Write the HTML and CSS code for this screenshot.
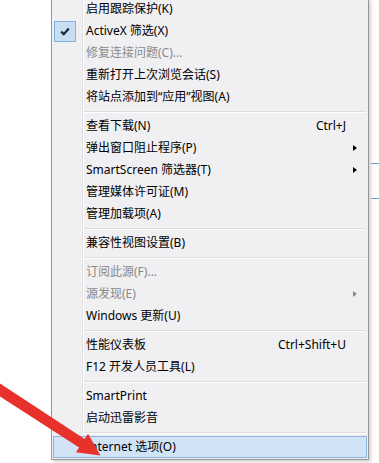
FILE: index.html
```html
<!DOCTYPE html>
<html lang="zh-CN">
<head>
<meta charset="utf-8">
<title>IE 工具菜单</title>
<link rel="stylesheet" href="styles.css">
</head>
<body>
<div class="page">
  <div class="left-space"></div>
  <ul class="menu">
    <li class="item"><span class="icon"></span><span class="label">启用跟踪保护(K)</span><span class="key"></span><span class="sub"></span></li>
    <li class="item"><span class="icon"><span class="check"><svg width="10" height="9" viewBox="0 0 10 9"><path d="M1.2 4.6 L3.8 7.2 L8.8 1.6" fill="none" stroke="#1c2636" stroke-width="2.2"/></svg></span></span><span class="label">ActiveX 筛选(X)</span><span class="key"></span><span class="sub"></span></li>
    <li class="item disabled"><span class="icon"></span><span class="label">修复连接问题(C)...</span><span class="key"></span><span class="sub"></span></li>
    <li class="item"><span class="icon"></span><span class="label">重新打开上次浏览会话(S)</span><span class="key"></span><span class="sub"></span></li>
    <li class="item"><span class="icon"></span><span class="label">将站点添加到“应用”视图(A)</span><span class="key"></span><span class="sub"></span></li>
    <li class="sep"></li>
    <li class="item"><span class="icon"></span><span class="label">查看下载(N)</span><span class="key">Ctrl+J</span><span class="sub"></span></li>
    <li class="item"><span class="icon"></span><span class="label">弹出窗口阻止程序(P)</span><span class="key"></span><span class="sub"><i class="tri"></i></span></li>
    <li class="item"><span class="icon"></span><span class="label">SmartScreen 筛选器(T)</span><span class="key"></span><span class="sub"><i class="tri"></i></span></li>
    <li class="item"><span class="icon"></span><span class="label">管理媒体许可证(M)</span><span class="key"></span><span class="sub"></span></li>
    <li class="item"><span class="icon"></span><span class="label">管理加载项(A)</span><span class="key"></span><span class="sub"></span></li>
    <li class="sep"></li>
    <li class="item"><span class="icon"></span><span class="label">兼容性视图设置(B)</span><span class="key"></span><span class="sub"></span></li>
    <li class="sep"></li>
    <li class="item disabled"><span class="icon"></span><span class="label">订阅此源(F)...</span><span class="key"></span><span class="sub"></span></li>
    <li class="item disabled"><span class="icon"></span><span class="label">源发现(E)</span><span class="key"></span><span class="sub"><i class="tri"></i></span></li>
    <li class="item"><span class="icon"></span><span class="label">Windows 更新(U)</span><span class="key"></span><span class="sub"></span></li>
    <li class="sep"></li>
    <li class="item"><span class="icon"></span><span class="label">性能仪表板</span><span class="key">Ctrl+Shift+U</span><span class="sub"></span></li>
    <li class="item"><span class="icon"></span><span class="label">F12 开发人员工具(L)</span><span class="key"></span><span class="sub"></span></li>
    <li class="sep"></li>
    <li class="item"><span class="icon"></span><span class="label">SmartPrint</span><span class="key"></span><span class="sub"></span></li>
    <li class="item"><span class="icon"></span><span class="label">启动迅雷影音</span><span class="key"></span><span class="sub"></span></li>
    <li class="sep"></li>
    <li class="item hover"><span class="icon"></span><span class="label">Internet 选项(O)</span><span class="key"></span><span class="sub"></span></li>
  </ul>
  <div class="right-space">
    <div class="bg-line"></div>
    <div class="bg-line second"></div>
  </div>
</div>
<svg class="pointer" width="379" height="463" viewBox="0 0 379 463">
  <polygon points="-7,379 84.6,439 88,433.8 100.5,455.5 76,452.2 79.1,447.4 -13,388" fill="#e8312b"/>
</svg>
</body>
</html>
```

FILE: styles.css
```css
html, body {
  margin: 0;
  padding: 0;
  background: #ffffff;
  overflow: hidden;
}

.page {
  display: flex;
  align-items: flex-start;
  width: 379px;
  height: 463px;
}

.left-space {
  width: 51px;
  flex: none;
}

.menu {
  list-style: none;
  margin: -2px 0 0 0;
  padding: 0 1px 1px 1px;
  width: 318px;
  flex: none;
  box-sizing: border-box;
  border: 1px solid #979797;
  border-top: none;
  background:
    linear-gradient(to right,
      transparent 30px,
      #e2e2e4 30px, #e2e2e4 31px,
      #ffffff 31px, #ffffff 32px,
      transparent 32px),
    #f0eff2;
  box-shadow: 2px 2px 3px rgba(0, 0, 0, 0.18);
  font-family: "Segoe UI", "Noto Sans", "Noto Sans CJK SC", sans-serif;
  font-size: 12px;
  color: #000000;
}

.item {
  display: flex;
  align-items: center;
  height: 22px;
  padding-right: 9px;
  box-sizing: border-box;
  border: 1px solid transparent;
}

.item .icon {
  width: 29px;
  height: 20px;
  flex: none;
  display: flex;
  align-items: center;
}

.item .label {
  flex: 1;
  padding-left: 3px;
  white-space: nowrap;
  line-height: 20px;
}

.item .key {
  white-space: nowrap;
  line-height: 20px;
}

.item .sub {
  width: 11px;
  flex: none;
  display: flex;
  justify-content: flex-end;
  align-items: center;
}

.tri {
  display: block;
  width: 0;
  height: 0;
  border-top: 3.5px solid transparent;
  border-bottom: 3.5px solid transparent;
  border-left: 4px solid #000000;
}

.check {
  display: flex;
  align-items: center;
  justify-content: center;
  width: 20px;
  height: 19px;
  margin-left: 0;
  border: 1px solid #83b2e2;
  background: #c7def4;
}

.disabled {
  color: #8a8a8a;
}

.disabled .tri {
  border-left-color: #8a8a8a;
}

.hover {
  border-color: #8fb3dc;
  background: #d1e3f6;
}

.sep {
  height: 1px;
  margin: 3px 1px 2px 31px;
  border-top: 1px solid #dcdcdf;
  background: #ffffff;
}

.right-space {
  flex: 1;
  padding-top: 163px;
  padding-left: 2px;
}

.bg-line {
  height: 1px;
  background: #6f9bc8;
}

.bg-line.second {
  margin-top: 34px;
}

.pointer {
  position: absolute;
  left: 0;
  top: 0;
  pointer-events: none;
}
```
